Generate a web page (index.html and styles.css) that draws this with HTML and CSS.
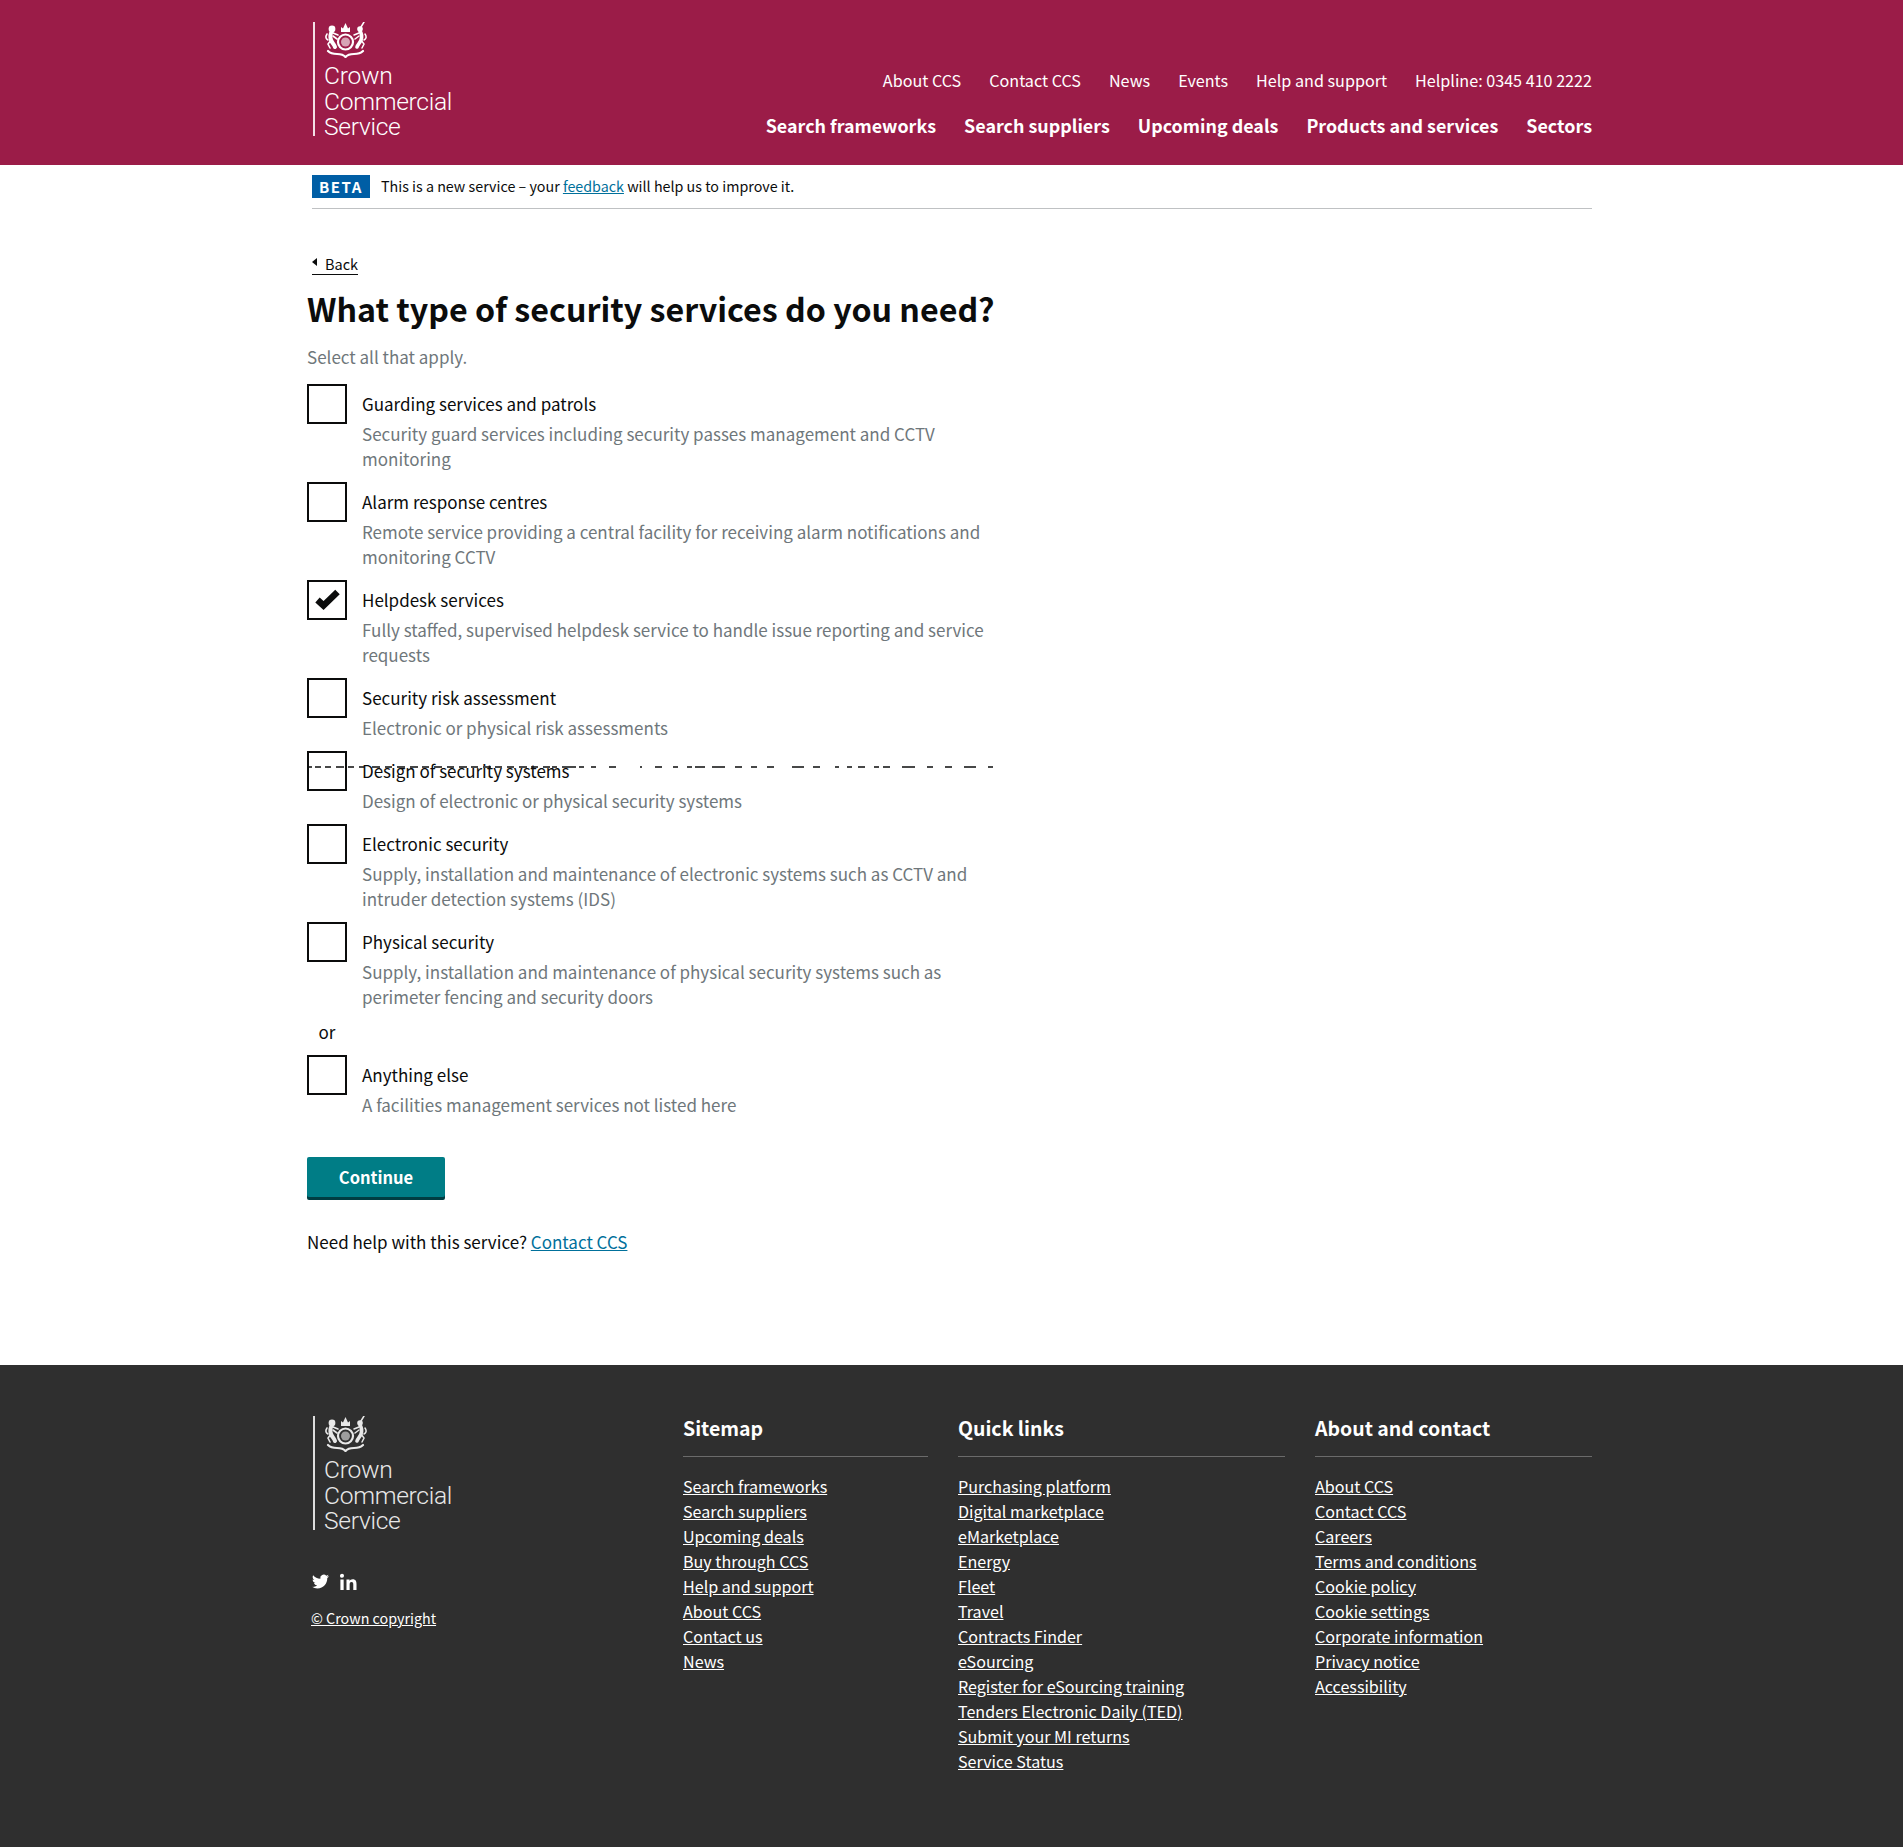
FILE: index.html
```html
<!DOCTYPE html>
<html lang="en">
<head>
  <meta charset="UTF-8" />
  <meta name="viewport" content="width=device-width, initial-scale=1.0" />
  <title>What type of security services do you need?</title>
  <link rel="stylesheet" href="styles.css">
</head>
<body>
  <svg class="defs" width="0" height="0" aria-hidden="true">
    <symbol id="crest" viewBox="0 0 44 36">
      <path fill="currentColor" d="M17 10V5l2 1.500L21.500 1 24 6.500 26 5v5z" />
      <circle cx="21.500" cy="20" r="7.500" fill="none" stroke="currentColor" stroke-width="2.200" />
      <circle cx="21.500" cy="20" r="4.500" fill="currentColor" opacity=".6" />
      <g fill="none" stroke="currentColor" stroke-linecap="round">
        <path stroke-width="4" d="M8 9c-2 3-2 6-1 9 1 3 3 4 4 7" />
        <path stroke-width="1.600" d="M9 11l5 2M9 14l4 3M7 18l-3 4 2 4M3 12c-2 3-1 5 1 6" />
        <path stroke-width="3.600" d="M36 9c2 3 2 6 1 9-1 3-3 4-4 7" />
        <path stroke-width="1.500" d="M35 11l-5 2M35 14l-4 3M37 18l3 4-2 4M41 12c2 3 1 5-1 6M37 5l3-5" />
        <path stroke-width="2.200" d="M4 29c3 3 6 3 9 3 3 0 6 0 8.500 3 2.500-3 5.500-3 8.500-3 3 0 6 0 9-3" />
      </g>
      <circle cx="8" cy="7" r="3.400" fill="currentColor" />
      <circle cx="36" cy="7" r="2.800" fill="currentColor" />
    </symbol>
    <symbol id="twitter" viewBox="0 0 24 24">
      <path d="M23.953 4.570a10 10 0 01-2.825.775 4.958 4.958 0 002.163-2.723c-.951.555-2.005.959-3.127 1.184a4.920 4.920 0 00-8.384 4.482C7.690 8.095 4.067 6.130 1.640 3.162a4.822 4.822 0 00-.666 2.475c0 1.710.870 3.213 2.188 4.096a4.904 4.904 0 01-2.228-.616v.060a4.923 4.923 0 003.946 4.827 4.996 4.996 0 01-2.212.085 4.936 4.936 0 004.604 3.417 9.867 9.867 0 01-6.102 2.105c-.390 0-.779-.023-1.170-.067a13.995 13.995 0 007.557 2.209c9.053 0 13.998-7.496 13.998-13.985 0-.210 0-.420-.015-.630A9.935 9.935 0 0024 4.590z" />
    </symbol>
    <symbol id="linkedin" viewBox="0 0 21 21">
      <path d="M4.980 3.500a2.500 2.500 0 11-5 0 2.500 2.500 0 015 0zM.500 8h4v13h-4zM8 8h3.800v1.800h.050c.530-1 1.830-2.050 3.770-2.050 4.030 0 4.780 2.650 4.780 6.100V21h-4v-6.300c0-1.500-.030-3.430-2.090-3.430-2.090 0-2.410 1.630-2.410 3.320V21H8z" />
    </symbol>
  </svg>

  <header class="site-header">
    <div class="wrap header-inner">
      <a class="logo" href="#">
        <svg class="crest"><use href="#crest" /></svg>
        <span class="logo-text">Crown<br>Commercial<br>Service</span>
      </a>
      <nav class="header-nav">
        <ul class="nav-top">
          <li><a href="#">About CCS</a></li>
          <li><a href="#">Contact CCS</a></li>
          <li><a href="#">News</a></li>
          <li><a href="#">Events</a></li>
          <li><a href="#">Help and support</a></li>
          <li>Helpline: 0345 410 2222</li>
        </ul>
        <ul class="nav-main">
          <li><a href="#">Search frameworks</a></li>
          <li><a href="#">Search suppliers</a></li>
          <li><a href="#">Upcoming deals</a></li>
          <li><a href="#">Products and services</a></li>
          <li><a href="#">Sectors</a></li>
        </ul>
      </nav>
    </div>
  </header>

  <div class="wrap">
    <div class="beta-bar">
      <strong class="beta-tag">BETA</strong>
      <span class="beta-text">This is a new service – your <a href="#">feedback</a> will help us to improve it.</span>
    </div>
    <a class="back-link" href="#">Back</a>

    <main class="main">
      <h1>What type of security services do you need?</h1>
      <p class="lead">Select all that apply.</p>

      <form class="options">
        <div class="option">
          <span class="box"></span>
          <div class="option-text">
            <div class="option-label">Guarding services and patrols</div>
            <div class="option-hint">Security guard services including security passes management and CCTV monitoring</div>
          </div>
        </div>
        <div class="option">
          <span class="box"></span>
          <div class="option-text">
            <div class="option-label">Alarm response centres</div>
            <div class="option-hint">Remote service providing a central facility for receiving alarm notifications and monitoring CCTV</div>
          </div>
        </div>
        <div class="option">
          <span class="box">
            <svg class="tick" viewBox="0 0 36 36"><path d="M8.500 18l6 5.500L28.500 10" /></svg>
          </span>
          <div class="option-text">
            <div class="option-label">Helpdesk services</div>
            <div class="option-hint">Fully staffed, supervised helpdesk service to handle issue reporting and service requests</div>
          </div>
        </div>
        <div class="option">
          <span class="box"></span>
          <div class="option-text">
            <div class="option-label">Security risk assessment</div>
            <div class="option-hint">Electronic or physical risk assessments</div>
          </div>
        </div>
        <div class="option">
          <span class="box"></span>
          <div class="option-text">
            <div class="option-label">Design of security systems</div>
            <div class="option-hint">Design of electronic or physical security systems</div>
          </div>
        </div>
        <div class="option">
          <span class="box"></span>
          <div class="option-text">
            <div class="option-label">Electronic security</div>
            <div class="option-hint">Supply, installation and maintenance of electronic systems such as CCTV and intruder detection systems (IDS)</div>
          </div>
        </div>
        <div class="option">
          <span class="box"></span>
          <div class="option-text">
            <div class="option-label">Physical security</div>
            <div class="option-hint">Supply, installation and maintenance of physical security systems such as perimeter fencing and security doors</div>
          </div>
        </div>
        <div class="or">or</div>
        <div class="option">
          <span class="box"></span>
          <div class="option-text">
            <div class="option-label">Anything else</div>
            <div class="option-hint">A facilities management services not listed here</div>
          </div>
        </div>

        <!-- stray slice of the heading that sits over the list -->
        <svg class="glitch" width="690" height="2">
          <path d="M0 1h5M8 1h6M18 1h6M29 1h8M41 1h6M52 1h5M65 1h8M78 1h7M90 1h8M103 1h8M115 1h7M127 1h8M140 1h7M152 1h8M164 1h7M176 1h8M188 1h7M200 1h7M212 1h8M224 1h7M236 1h7M245 1h5M255 1h14M272 1h5M284 1h5M302 1h7M333 1h2M348 1h7M366 1h5M380 1h5M388 1h10M405 1h13M428 1h7M444 1h6M460 1h7M485 1h12M506 1h7M528 1h4M540 1h5M551 1h7M567 1h5M576 1h7M595 1h13M620 1h6M638 1h7M657 1h12M681 1h5" />
        </svg>

        <button class="continue" type="button">Continue</button>
      </form>

      <p class="help">Need help with this service? <a href="#">Contact CCS</a></p>
    </main>
  </div>

  <footer class="site-footer">
    <div class="wrap footer-grid">
      <div class="footer-brand">
        <a class="logo logo-footer" href="#">
          <svg class="crest"><use href="#crest" /></svg>
          <span class="logo-text">Crown<br>Commercial<br>Service</span>
        </a>
        <div class="social">
          <svg class="icon-twitter"><use href="#twitter" /></svg>
          <svg class="icon-linkedin"><use href="#linkedin" /></svg>
        </div>
        <a class="copyright" href="#">© Crown copyright</a>
      </div>
      <div class="footer-col">
        <h2>Sitemap</h2>
        <ul>
          <li><a href="#">Search frameworks</a></li>
          <li><a href="#">Search suppliers</a></li>
          <li><a href="#">Upcoming deals</a></li>
          <li><a href="#">Buy through CCS</a></li>
          <li><a href="#">Help and support</a></li>
          <li><a href="#">About CCS</a></li>
          <li><a href="#">Contact us</a></li>
          <li><a href="#">News</a></li>
        </ul>
      </div>
      <div class="footer-col">
        <h2>Quick links</h2>
        <ul>
          <li><a href="#">Purchasing platform</a></li>
          <li><a href="#">Digital marketplace</a></li>
          <li><a href="#">eMarketplace</a></li>
          <li><a href="#">Energy</a></li>
          <li><a href="#">Fleet</a></li>
          <li><a href="#">Travel</a></li>
          <li><a href="#">Contracts Finder</a></li>
          <li><a href="#">eSourcing</a></li>
          <li><a href="#">Register for eSourcing training</a></li>
          <li><a href="#">Tenders Electronic Daily (TED)</a></li>
          <li><a href="#">Submit your MI returns</a></li>
          <li><a href="#">Service Status</a></li>
        </ul>
      </div>
      <div class="footer-col">
        <h2>About and contact</h2>
        <ul>
          <li><a href="#">About CCS</a></li>
          <li><a href="#">Contact CCS</a></li>
          <li><a href="#">Careers</a></li>
          <li><a href="#">Terms and conditions</a></li>
          <li><a href="#">Cookie policy</a></li>
          <li><a href="#">Cookie settings</a></li>
          <li><a href="#">Corporate information</a></li>
          <li><a href="#">Privacy notice</a></li>
          <li><a href="#">Accessibility</a></li>
        </ul>
      </div>
    </div>
  </footer>
</body>
</html>
```

FILE: styles.css
```css
body {
  font-family: "Noto Sans CJK SC", "Noto Sans", sans-serif;
  font-size: 17px;
  line-height: 25px;
  color: #0b0c0c;
  background-color: #fff;
  margin: 0;
  padding: 0;
}
a {
  color: #00709b;
}
ul {
  list-style: none;
  margin: 0;
  padding: 0;
}
.defs {
  position: absolute;
}
.wrap {
  width: 1281px;
  margin: 0 auto;
}

/* header */
.site-header {
  background-color: #9b1c48;
  height: 165px;
}
.header-inner {
  display: flex;
  justify-content: space-between;
}
.logo {
  display: block;
  width: 140px;
  height: 114px;
  margin: 22px 0 0 2px;
  padding-left: 9px;
  border-left: 2px solid #f3dfe6;
  color: #fff;
  text-decoration: none;
}
.crest {
  display: block;
  width: 44px;
  height: 36px;
  margin-bottom: 5px;
}
.logo-text {
  display: block;
  font-family: Roboto, "Liberation Sans", sans-serif;
  font-weight: 300;
  font-size: 24.600px;
  line-height: 25.500px;
  letter-spacing: -0.300px;
  white-space: nowrap;
}
.header-nav {
  display: flex;
  flex-direction: column;
  align-items: flex-end;
  padding-top: 68px;
}
.nav-top,
.nav-main {
  display: flex;
  color: #fff;
}
.nav-top {
  gap: 28px;
  font-size: 16.150px;
  height: 26px;
}
.nav-main {
  gap: 28px;
  font-size: 17.900px;
  font-weight: 700;
  margin-top: 19px;
}
.nav-top a,
.nav-main a {
  color: #fff;
  text-decoration: none;
}

/* beta */
.beta-bar {
  display: flex;
  align-items: center;
  gap: 11px;
  height: 43px;
  margin-left: 1px;
  border-bottom: 1px solid #bfc1c3;
  font-size: 14.300px;
}
.beta-text {
  margin-bottom: 2px;
}
.beta-tag {
  background-color: #005ea5;
  color: #fff;
  width: 58px;
  height: 23px;
  line-height: 23px;
  text-align: center;
  font-size: 15px;
  letter-spacing: 1.500px;
}
.back-link {
  display: inline-block;
  position: relative;
  margin: 45px 0 0 1px;
  padding-left: 13px;
  padding-bottom: 1px;
  border-bottom: 1px solid #0b0c0c;
  color: #0b0c0c;
  font-size: 14.500px;
  line-height: 19px;
  text-decoration: none;
}
.back-link::before {
  content: "";
  position: absolute;
  left: 0;
  top: 4px;
  border-top: 4px solid transparent;
  border-bottom: 4px solid transparent;
  border-right: 5px solid #0b0c0c;
}

/* question */
.main {
  margin-left: -4px;
  padding-bottom: 111px;
}
h1 {
  font-size: 32.200px;
  line-height: 44px;
  font-weight: 700;
  margin: 11px 0 0;
}
.lead {
  color: #6f777b;
  margin: 14px 0 0;
}
.options {
  position: relative;
  margin-top: 15px;
  width: 700px;
}
.option {
  display: flex;
  gap: 15px;
  margin-bottom: 11px;
}
.box {
  flex: none;
  width: 36px;
  height: 36px;
  border: 2px solid #0b0c0c;
  background: #fff;
}
.tick {
  display: block;
  width: 36px;
  height: 36px;
  fill: none;
  stroke: #0b0c0c;
  stroke-width: 6.500;
}
.option-text {
  padding-top: 7px;
  width: 640px;
}
.option-hint {
  color: #6f777b;
  margin-top: 5px;
}
.or {
  width: 40px;
  text-align: center;
  line-height: 24px;
  margin-bottom: 11px;
}
.glitch {
  position: absolute;
  left: 0;
  top: 382px;
  stroke: #0b0c0c;
  stroke-width: 1.500;
}
.continue {
  display: block;
  margin-top: 40px;
  width: 138px;
  height: 40px;
  padding: 0;
  border: none;
  border-radius: 2px;
  background-color: #007d86;
  box-shadow: 0 3px 0 #003d42;
  color: #fff;
  font-family: inherit;
  font-size: 16.500px;
  font-weight: 700;
  cursor: pointer;
}
.help {
  margin: 32px 0 0;
}

/* footer */
.site-footer {
  background-color: #2f2f2f;
  color: #fff;
  height: 482px;
  font-size: 16.100px;
}
.site-footer a {
  color: #fff;
}
.footer-grid {
  display: flex;
  padding-top: 49px;
}
.footer-brand {
  width: 372px;
  padding-top: 2px;
}
.logo-footer {
  margin-top: 0;
  border-left-color: #ddd;
}
.site-footer .logo-footer {
  color: #e8e8e8;
}
.social {
  display: flex;
  align-items: center;
  gap: 11px;
  margin: 41px 0 0 1px;
  height: 20px;
}
.icon-twitter {
  width: 17px;
  height: 17px;
  fill: #fff;
}
.icon-linkedin {
  width: 17px;
  height: 17px;
  fill: #fff;
}
.copyright {
  display: block;
  margin: 14px 0 0;
  font-size: 14.300px;
}
.footer-col {
  margin-right: 30px;
}
.footer-col:nth-child(2) {
  width: 245px;
}
.footer-col:nth-child(3) {
  width: 327px;
}
.footer-col:nth-child(4) {
  width: 277px;
  margin-right: 0;
}
.footer-col h2 {
  font-size: 19.500px;
  line-height: 27px;
  font-weight: 700;
  margin: 0 0 17px;
  padding-bottom: 15px;
  border-bottom: 1px solid #6b6b6b;
}
```
